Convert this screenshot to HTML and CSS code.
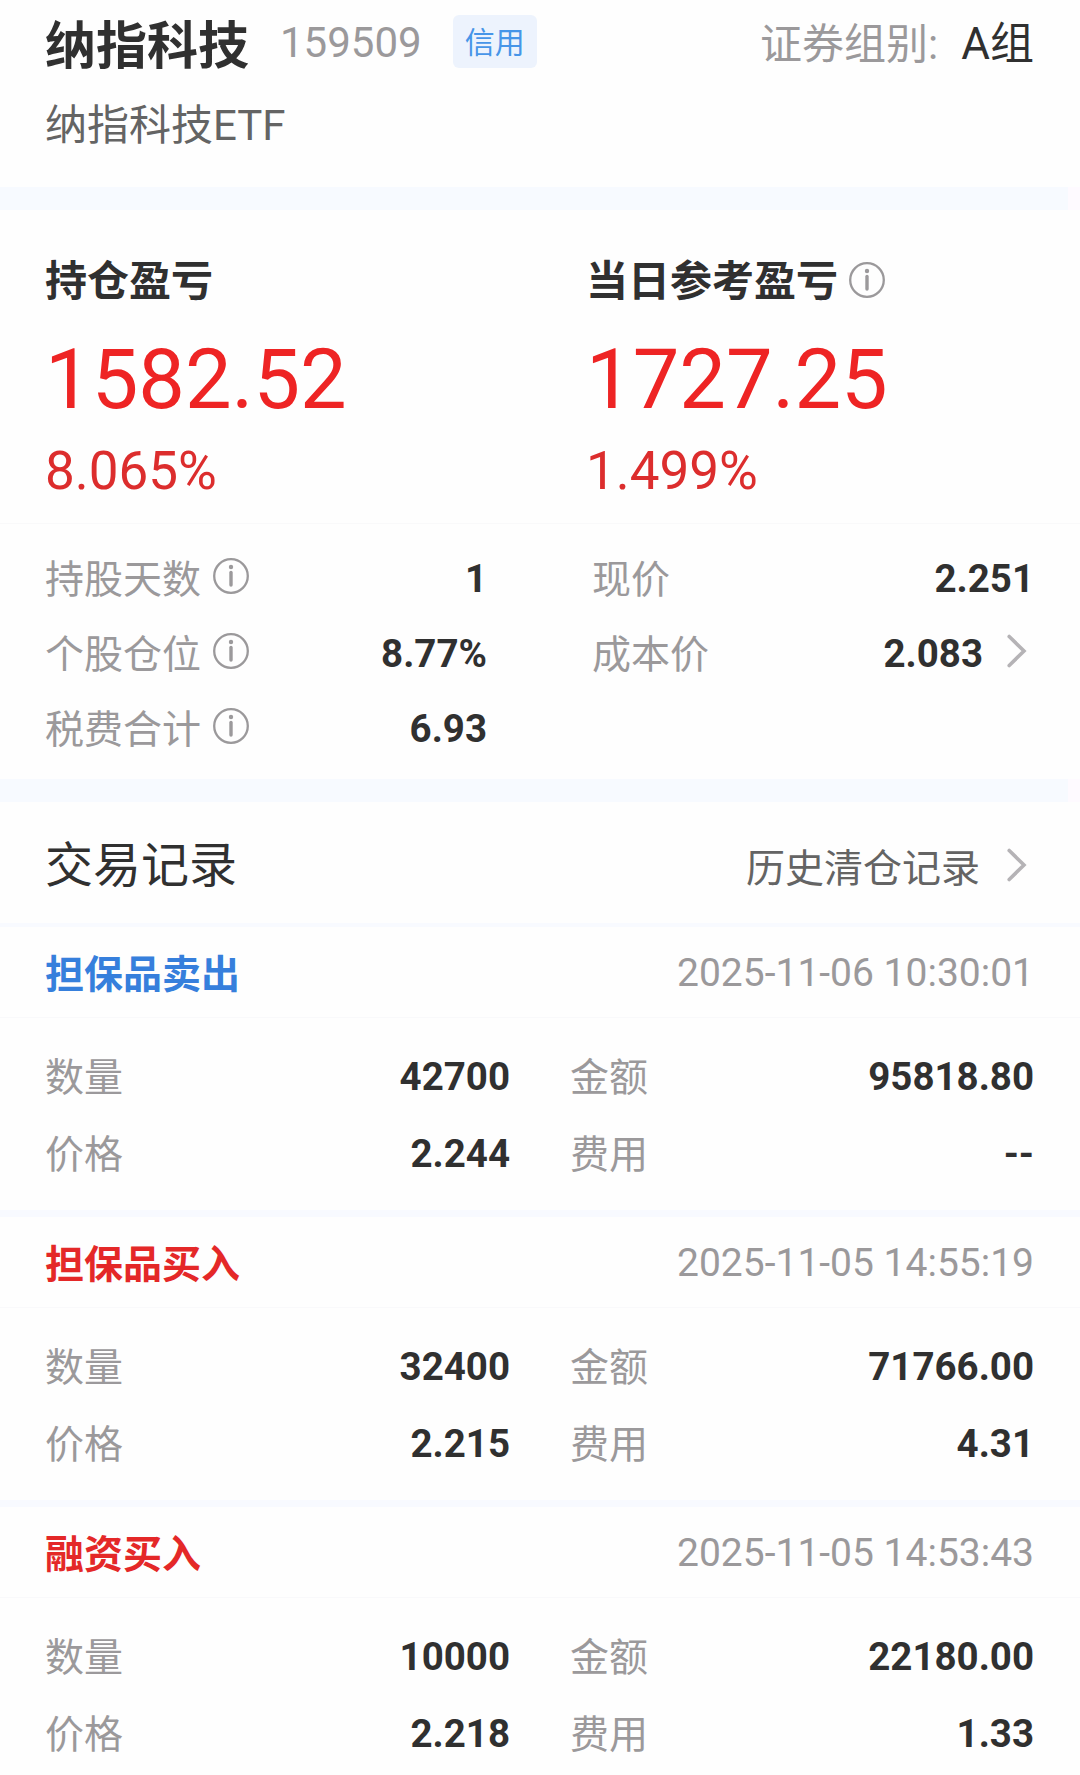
FILE: index.html
```
<!DOCTYPE html>
<html lang="zh-CN">
<head>
  <meta charset="UTF-8">
  <meta name="viewport" content="width=device-width, initial-scale=1.0">
  <title>纳指科技 159509</title>
  <link rel="stylesheet" href="styles.css">
</head>
<body>
  <svg class="sprite">
    <symbol id="info" viewBox="0 0 36 36">
      <circle cx="18" cy="18" r="16.8" fill="none" stroke="currentColor" stroke-width="2.3"/>
      <circle cx="18" cy="9" r="2.2" fill="currentColor"/>
      <path d="M18 14.5V27" fill="none" stroke="currentColor" stroke-width="3.4" stroke-linecap="round"/>
    </symbol>
    <symbol id="arrow" viewBox="0 0 20 34">
      <path d="M2.2 2.5L17 17L2.2 31.5" fill="none" stroke="currentColor" stroke-width="3.6" stroke-linecap="round"/>
    </symbol>
  </svg>

  <main class="page">
    <header class="stock">
      <div class="stock-top">
        <h1>纳指科技</h1>
        <span class="code">159509</span>
        <span class="tag">信用</span>
        <span class="group-label">证券组别:</span>
        <span class="group">A组</span>
      </div>
      <p class="fullname">纳指科技ETF</p>
    </header>

    <div class="band"></div>

    <section class="profit">
      <div>
        <h2>持仓盈亏</h2>
        <p class="amount">1582.52</p>
        <p class="percent">8.065%</p>
      </div>
      <div>
        <h2>当日参考盈亏<svg class="info"><use href="#info"/></svg></h2>
        <p class="amount">1727.25</p>
        <p class="percent">1.499%</p>
      </div>
    </section>

    <section class="stats">
      <div class="row"><span>持股天数</span><svg class="info"><use href="#info"/></svg><b>1</b></div>
      <div class="row"><span>现价</span><b>2.251</b></div>
      <div class="row"><span>个股仓位</span><svg class="info"><use href="#info"/></svg><b>8.77%</b></div>
      <div class="row"><span>成本价</span><b>2.083</b><svg class="arrow"><use href="#arrow"/></svg></div>
      <div class="row"><span>税费合计</span><svg class="info"><use href="#info"/></svg><b>6.93</b></div>
    </section>

    <div class="band"></div>

    <div class="history">
      <h3>交易记录</h3>
      <a class="history-link">历史清仓记录<svg class="arrow"><use href="#arrow"/></svg></a>
    </div>

    <article class="record">
      <div class="record-head"><span class="sell">担保品卖出</span><time>2025-11-06 10:30:01</time></div>
      <div class="record-body">
        <div class="row"><span>数量</span><b>42700</b></div>
        <div class="row"><span>金额</span><b>95818.80</b></div>
        <div class="row"><span>价格</span><b>2.244</b></div>
        <div class="row"><span>费用</span><b>--</b></div>
      </div>
    </article>

    <article class="record">
      <div class="record-head"><span class="buy">担保品买入</span><time>2025-11-05 14:55:19</time></div>
      <div class="record-body">
        <div class="row"><span>数量</span><b>32400</b></div>
        <div class="row"><span>金额</span><b>71766.00</b></div>
        <div class="row"><span>价格</span><b>2.215</b></div>
        <div class="row"><span>费用</span><b>4.31</b></div>
      </div>
    </article>

    <article class="record">
      <div class="record-head"><span class="buy">融资买入</span><time>2025-11-05 14:53:43</time></div>
      <div class="record-body">
        <div class="row"><span>数量</span><b>10000</b></div>
        <div class="row"><span>金额</span><b>22180.00</b></div>
        <div class="row"><span>价格</span><b>2.218</b></div>
        <div class="row"><span>费用</span><b>1.33</b></div>
      </div>
    </article>
  </main>
</body>
</html>
```
FILE: styles.css
```
* {
  box-sizing: border-box;
}
body {
  margin: 0;
  background: #fefefe;
  color: #303030;
  font-family: Roboto, 'Noto Sans CJK SC', sans-serif;
  font-size: 39px;
}
h1, h2, h3, p {
  margin: 0;
}
.sprite {
  display: none;
}
.page {
  width: 1080px;
  height: 1775px;
  overflow: hidden;
}
.stock {
  height: 187px;
  padding: 11px 46px 0 45px;
}
.stock-top {
  display: flex;
  align-items: center;
  height: 66px;
  font-size: 42px;
}
h1 {
  padding-top: 5px;
  font-size: 51px;
  line-height: 66px;
}
.code {
  margin-left: 31px;
  padding-bottom: 4px;
  color: #9b999b;
}
.tag {
  width: 84px;
  height: 53px;
  margin: -6px 0 0 31px;
  border-radius: 6px;
  background: #edf3fd;
  color: #4795e8;
  font-size: 30px;
  line-height: 55px;
  text-align: center;
}
.group-label {
  margin-left: auto;
  padding-bottom: 8px;
  color: #9b999b;
}
.group {
  margin-left: 23px;
  padding-bottom: 8px;
  font-size: 44px;
}
.fullname {
  margin-top: 19px;
  color: #646464;
  font-size: 42px;
  line-height: 60px;
}
.band {
  height: 23px;
  background: linear-gradient(to right, #f7faff 1068px, #fefaff 1068px);
}
.profit {
  display: grid;
  grid-template-columns: 541px 1fr;
  height: 314px;
  padding: 42px 0 0 45px;
  border-bottom: 1px solid #f9f9fa;
}
h2 {
  display: flex;
  align-items: center;
  font-size: 42px;
  line-height: 60px;
}
.info {
  width: 36px;
  height: 36px;
  color: #9b999b;
}
h2 .info {
  margin: -4px 0 0 11px;
}
.amount {
  margin-top: 18px;
  color: #ee2424;
  font-size: 83px;
  line-height: 100px;
}
.percent {
  margin-top: 9px;
  color: #dc2d2d;
  font-size: 53px;
  line-height: 64px;
}
.stats {
  display: grid;
  grid-template-columns: 442px 442px;
  grid-auto-rows: 75px;
  column-gap: 105px;
  height: 255px;
  padding: 17px 46px 0 45px;
}
.row {
  display: flex;
  align-items: center;
}
.row span {
  padding-bottom: 5px;
  color: #9b999b;
}
.row b {
  margin-left: auto;
  padding-bottom: 1px;
  font-size: 38.5px;
  font-weight: 700;
}
.row .info {
  margin: -5px 0 0 12px;
}
.arrow {
  width: 20px;
  height: 34px;
  margin: 0 7px 0 24px;
  color: #b5b3b6;
}
.row .arrow {
  margin-top: -5px;
}
.history {
  display: flex;
  justify-content: space-between;
  align-items: center;
  height: 125px;
  padding: 0 46px 0 45px;
  border-bottom: 4px solid #f8faff;
}
h3 {
  padding-bottom: 3px;
  font-size: 48px;
  font-weight: 400;
}
.history-link {
  display: flex;
  align-items: center;
  padding-top: 4px;
  color: #646464;
}
.history-link .arrow {
  margin-left: 27px;
}
.record {
  border-bottom: 7px solid #f8faff;
}
.record-head {
  display: flex;
  justify-content: space-between;
  align-items: center;
  height: 91px;
  padding: 0 46px 0 45px;
  border-bottom: 1px solid #f9f9fb;
}
.sell, .buy {
  padding-bottom: 3px;
  font-weight: 700;
}
.sell {
  color: #367fdc;
}
.buy {
  color: #e42828;
}
time {
  padding-top: 2px;
  color: #9b999b;
}
.record-body {
  display: grid;
  grid-template-columns: 465px 464px;
  grid-auto-rows: 77px;
  column-gap: 60px;
  height: 192px;
  padding: 20px 46px 0 45px;
}
```
